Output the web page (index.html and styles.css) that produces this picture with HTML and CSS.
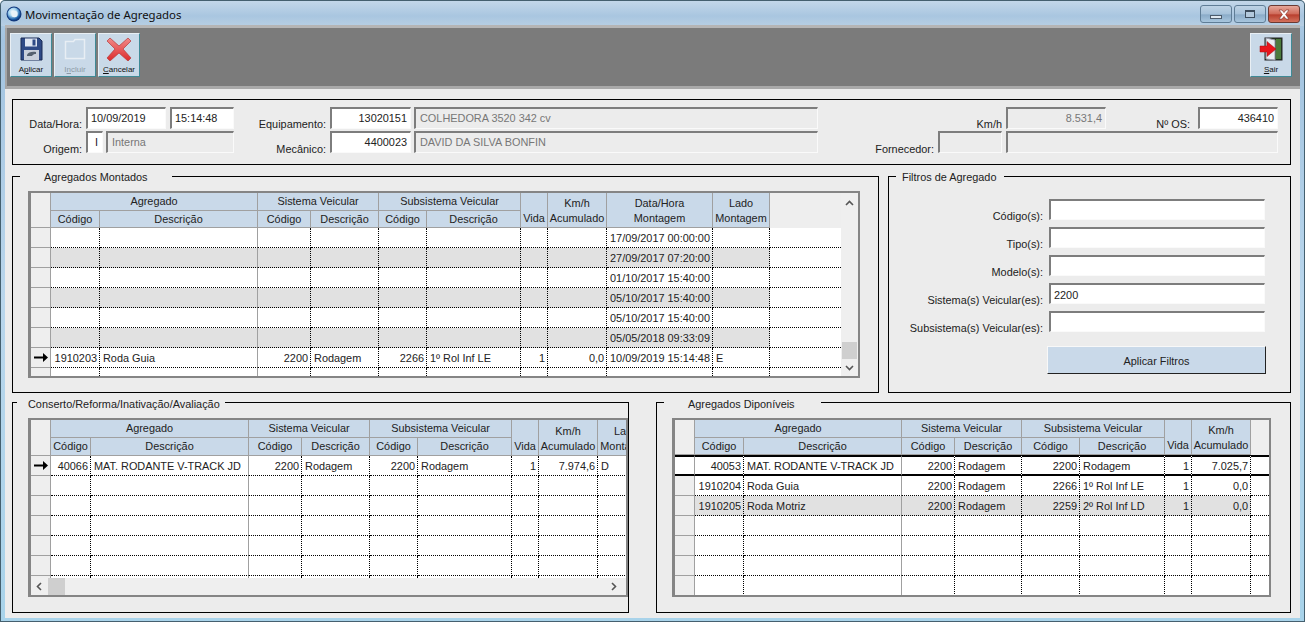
FILE: index.html
```html
<!DOCTYPE html>
<html lang="pt-BR">
<head>
<meta charset="utf-8">
<title>Movimentação de Agregados</title>
<link rel="stylesheet" href="styles.css">
</head>
<body>
<div class="win">
  <header class="titlebar">
    <svg class="appicon" width="16" height="16" viewBox="0 0 16 16"><defs><radialGradient id="ag" cx="0.4" cy="0.35" r="0.7"><stop offset="0" stop-color="#ffffff"/><stop offset="0.45" stop-color="#9fd0ee"/><stop offset="0.8" stop-color="#1c5fa8"/><stop offset="1" stop-color="#0c2f6c"/></radialGradient></defs><circle cx="8" cy="8" r="7.5" fill="#12397e"/><circle cx="8" cy="8" r="6.5" fill="url(#ag)"/><circle cx="8.500" cy="8" r="3.200" fill="#e8f2f8"/></svg>
    <span class="wintitle">Movimentação de Agregados</span>
    <div class="capbtns">
      <div class="capbtn"><span class="g-min"></span></div>
      <div class="capbtn"><span class="g-max"></span></div>
      <div class="capbtn close"><svg width="14" height="11" viewBox="0 0 14 11"><path d="M2 1h3l2 2.600L9 1h3L8.600 5.500 12 10H9L7 7.400 5 10H2l3.400-4.500z" fill="#fff" stroke="#7a2a20" stroke-width=".6"/></svg></div>
    </div>
  </header>
  <div class="client">
    <nav class="toolbar">
      <div class="tgroup">
        <button class="tbtn">
          <svg width="24" height="24" viewBox="0 0 24 24"><path d="M2 1h18l3 3v19H2z" fill="#2f4a86" stroke="#1a2a55"/><rect x="6" y="1.500" width="12" height="8" fill="#dfe6f2"/><rect x="13.500" y="2.500" width="3" height="6" fill="#2f4a86"/><rect x="5" y="13" width="15" height="10" fill="#c9cfdb"/><path d="M8 18c1-3 5-3.500 9-3v2c-2 0-3 .5-4 2H8z" fill="#55606f"/></svg>
          <span class="tlabel">A<u>p</u>licar</span>
        </button>
        <button class="tbtn off">
          <svg width="24" height="24" viewBox="0 0 24 24"><path d="M2.500 4.500h8l1.500-2h9.500v19h-19z" fill="none" stroke="#e8eef4" stroke-width="1.500"/></svg>
          <span class="tlabel">I<u>n</u>cluir</span>
        </button>
        <button class="tbtn">
          <svg width="26" height="24" viewBox="0 0 26 24"><defs><linearGradient id="xg" x1="0" y1="0" x2="0" y2="1"><stop offset="0" stop-color="#f28a8a"/><stop offset="1" stop-color="#dc2a2a"/></linearGradient></defs><path d="M4 1l9 8 9-8 3 3-8 8 8 9-3 3-9-8-9 8-3-3 8-9-8-8z" fill="url(#xg)" stroke="#b53a3a" stroke-width=".7"/></svg>
          <span class="tlabel"><u>C</u>ancelar</span>
        </button>
      </div>
      <button class="tbtn">
        <svg width="24" height="24" viewBox="0 0 24 24"><rect x="6" y="1" width="17" height="22" fill="#24401f" stroke="#222"/><path d="M17 2h5v20h-5z" fill="#4c7a3c"/><path d="M7 1l9 2v20l-9-1z" fill="#e9edf2" stroke="#99a"/><path d="M1 9h7V4.500l9 7.500-9 7.500V15H1z" fill="#e8141c" stroke="#a01010" stroke-width=".5"/></svg>
        <span class="tlabel"><u>S</u>air</span>
      </button>
    </nav>

    <section class="panel">
      <div class="frow">
        <span class="lbl w70">Data/Hora:</span>
        <div class="field w80">10/09/2019</div>
        <div class="field w64 ml4">15:14:48</div>
        <span class="lbl w96">Equipamento:</span>
        <div class="field w81 right">13020151</div>
        <div class="field ro w404 ml3">COLHEDORA 3520 342 cv</div>
        <span class="lbl w188">Km/h</span>
        <div class="field ro w100 right">8.531,4</div>
        <span class="lbl w92 os">Nº OS:</span>
        <div class="field w80 right">436410</div>
      </div>
      <div class="frow">
        <span class="lbl w70">Origem:</span>
        <div class="field w17 ctr">I</div>
        <div class="field ro w128 ml3">Interna</div>
        <span class="lbl w96">Mecânico:</span>
        <div class="field w81 right">4400023</div>
        <div class="field ro w404 ml3">DAVID DA SILVA BONFIN</div>
        <span class="lbl w120">Fornecedor:</span>
        <div class="field ro w64"></div>
        <div class="field ro w272 ml4"></div>
      </div>
    </section>

    <div class="row-mid">
      <fieldset class="gb">
        <legend class="lg lg-mont">Agregados Montados</legend>
        <div class="gb-body">
          <div class="frame with-v t1frame">
            <div class="view">
              <table class="grid">
                <colgroup><col class="c20"><col class="c49"><col class="c158"><col class="c53"><col class="c68"><col class="c48"><col class="c94"><col class="c27"><col class="c59"><col class="c106"><col class="c57"><col class="c71"></colgroup>
                <thead>
                  <tr class="h1"><th class="rh" rowspan="2"></th><th colspan="2">Agregado</th><th colspan="2">Sistema Veicular</th><th colspan="2">Subsistema Veicular</th><th rowspan="2" class="bot">Vida</th><th rowspan="2" class="bot">Km/h<br>Acumulado</th><th rowspan="2" class="bot">Data/Hora<br>Montagem</th><th rowspan="2" class="bot">Lado<br>Montagem</th><th class="rest" rowspan="2"></th></tr>
                  <tr class="h2 short"><th>Código</th><th>Descrição</th><th>Código</th><th>Descrição</th><th>Código</th><th>Descrição</th></tr>
                </thead>
                <tbody>
                  <tr><td class="rh"></td><td></td><td class="solid"></td><td></td><td></td><td></td><td></td><td></td><td></td><td>17/09/2017 00:00:00</td><td></td><td class="rest"></td></tr>
                  <tr class="alt"><td class="rh"></td><td></td><td class="solid"></td><td></td><td></td><td></td><td></td><td></td><td></td><td>27/09/2017 07:20:00</td><td></td><td class="rest"></td></tr>
                  <tr><td class="rh"></td><td></td><td class="solid"></td><td></td><td></td><td></td><td></td><td></td><td></td><td>01/10/2017 15:40:00</td><td></td><td class="rest"></td></tr>
                  <tr class="alt"><td class="rh"></td><td></td><td class="solid"></td><td></td><td></td><td></td><td></td><td></td><td></td><td>05/10/2017 15:40:00</td><td></td><td class="rest"></td></tr>
                  <tr><td class="rh"></td><td></td><td class="solid"></td><td></td><td></td><td></td><td></td><td></td><td></td><td>05/10/2017 15:40:00</td><td></td><td class="rest"></td></tr>
                  <tr class="alt"><td class="rh"></td><td></td><td class="solid"></td><td></td><td></td><td></td><td></td><td></td><td></td><td>05/05/2018 09:33:09</td><td></td><td class="rest"></td></tr>
                  <tr><td class="rh"><svg class="arrow" width="14" height="9" viewBox="0 0 14 9"><path d="M0 3.500h9V0l5 4.500L9 9V5.500H0z"/></svg></td><td class="n">1910203</td><td class="solid">Roda Guia</td><td class="n">2200</td><td>Rodagem</td><td class="n">2266</td><td>1º Rol Inf LE</td><td class="n">1</td><td class="n">0,0</td><td>10/09/2019 15:14:48</td><td>E</td><td class="rest"></td></tr>
                  <tr><td class="rh"></td><td></td><td class="solid"></td><td></td><td></td><td></td><td></td><td></td><td></td><td></td><td></td><td class="rest"></td></tr>
                </tbody>
              </table>
            </div>
            <div class="vscroll">
              <svg width="9" height="6" viewBox="0 0 9 6"><path d="M1 5l3.500-3.500L8 5" fill="none" stroke="#555" stroke-width="1.600"/></svg>
              <div class="vthumb"></div>
              <svg width="9" height="6" viewBox="0 0 9 6"><path d="M1 1l3.500 3.500L8 1" fill="none" stroke="#555" stroke-width="1.600"/></svg>
            </div>
          </div>
        </div>
      </fieldset>

      <fieldset class="gb">
        <legend class="lg lg-filt">Filtros de Agregado</legend>
        <div class="filters">
          <span class="lbl">Código(s):</span><div class="field"></div>
          <span class="lbl">Tipo(s):</span><div class="field"></div>
          <span class="lbl">Modelo(s):</span><div class="field"></div>
          <span class="lbl">Sistema(s) Veicular(es):</span><div class="field">2200</div>
          <span class="lbl">Subsistema(s) Veicular(es):</span><div class="field"></div>
          <button class="applybtn">Aplicar Filtros</button>
        </div>
      </fieldset>
    </div>

    <div class="row-bot">
      <fieldset class="gb">
        <legend class="lg lg-cons">Conserto/Reforma/Inativação/Avaliação</legend>
        <div class="gb-body">
          <div class="frame with-h">
            <div class="view">
              <table class="grid wide">
                <colgroup><col class="c20"><col class="c40"><col class="c158"><col class="c53"><col class="c68"><col class="c48"><col class="c94"><col class="c27"><col class="c59"><col class="c57"></colgroup>
                <thead>
                  <tr class="h1"><th class="rh" rowspan="2"></th><th colspan="2">Agregado</th><th colspan="2">Sistema Veicular</th><th colspan="2">Subsistema Veicular</th><th rowspan="2" class="bot">Vida</th><th rowspan="2" class="bot">Km/h<br>Acumulado</th><th rowspan="2" class="bot">Lado<br>Montagem</th></tr>
                  <tr class="h2"><th>Código</th><th>Descrição</th><th>Código</th><th>Descrição</th><th>Código</th><th>Descrição</th></tr>
                </thead>
                <tbody>
                  <tr><td class="rh"><svg class="arrow" width="14" height="9" viewBox="0 0 14 9"><path d="M0 3.500h9V0l5 4.500L9 9V5.500H0z"/></svg></td><td class="n">40066</td><td class="solid">MAT. RODANTE V-TRACK JD</td><td class="n">2200</td><td>Rodagem</td><td class="n">2200</td><td>Rodagem</td><td class="n">1</td><td class="n">7.974,6</td><td>D</td></tr>
                  <tr><td class="rh"></td><td></td><td class="solid"></td><td></td><td></td><td></td><td></td><td></td><td></td><td></td></tr>
                  <tr><td class="rh"></td><td></td><td class="solid"></td><td></td><td></td><td></td><td></td><td></td><td></td><td></td></tr>
                  <tr><td class="rh"></td><td></td><td class="solid"></td><td></td><td></td><td></td><td></td><td></td><td></td><td></td></tr>
                  <tr><td class="rh"></td><td></td><td class="solid"></td><td></td><td></td><td></td><td></td><td></td><td></td><td></td></tr>
                  <tr><td class="rh"></td><td></td><td class="solid"></td><td></td><td></td><td></td><td></td><td></td><td></td><td></td></tr>
                  <tr><td class="rh"></td><td></td><td class="solid"></td><td></td><td></td><td></td><td></td><td></td><td></td><td></td></tr>
                </tbody>
              </table>
            </div>
            <div class="hscroll">
              <svg width="6" height="9" viewBox="0 0 6 9"><path d="M5 1L1.500 4.500 5 8" fill="none" stroke="#555" stroke-width="1.600"/></svg>
              <div class="hthumb"></div>
              <svg class="hend" width="6" height="9" viewBox="0 0 6 9"><path d="M1 1l3.500 3.500L1 8" fill="none" stroke="#555" stroke-width="1.600"/></svg>
            </div>
          </div>
        </div>
      </fieldset>

      <fieldset class="gb">
        <legend class="lg lg-disp">Agregados Diponíveis</legend>
        <div class="gb-body">
          <div class="frame">
            <div class="view">
              <table class="grid">
                <colgroup><col class="c20"><col class="c49"><col class="c158"><col class="c53"><col class="c67"><col class="c58"><col class="c85"><col class="c27"><col class="c59"><col class="c18"></colgroup>
                <thead>
                  <tr class="h1"><th class="rh" rowspan="2"></th><th colspan="2">Agregado</th><th colspan="2">Sistema Veicular</th><th colspan="2">Subsistema Veicular</th><th rowspan="2" class="bot">Vida</th><th rowspan="2" class="bot">Km/h<br>Acumulado</th><th class="rest" rowspan="2"></th></tr>
                  <tr class="h2 short"><th>Código</th><th>Descrição</th><th>Código</th><th>Descrição</th><th>Código</th><th>Descrição</th></tr>
                </thead>
                <tbody>
                  <tr class="sel"><td class="rh"></td><td class="n">40053</td><td class="solid">MAT. RODANTE V-TRACK JD</td><td class="n">2200</td><td>Rodagem</td><td class="n">2200</td><td>Rodagem</td><td class="n">1</td><td class="n">7.025,7</td><td class="rest"></td></tr>
                  <tr><td class="rh"></td><td class="n">1910204</td><td class="solid">Roda Guia</td><td class="n">2200</td><td>Rodagem</td><td class="n">2266</td><td>1º Rol Inf LE</td><td class="n">1</td><td class="n">0,0</td><td class="rest"></td></tr>
                  <tr class="alt"><td class="rh"></td><td class="n">1910205</td><td class="solid">Roda Motriz</td><td class="n">2200</td><td>Rodagem</td><td class="n">2259</td><td>2º Rol Inf LD</td><td class="n">1</td><td class="n">0,0</td><td class="rest"></td></tr>
                  <tr><td class="rh"></td><td></td><td class="solid"></td><td></td><td></td><td></td><td></td><td></td><td></td><td class="rest"></td></tr>
                  <tr><td class="rh"></td><td></td><td class="solid"></td><td></td><td></td><td></td><td></td><td></td><td></td><td class="rest"></td></tr>
                  <tr><td class="rh"></td><td></td><td class="solid"></td><td></td><td></td><td></td><td></td><td></td><td></td><td class="rest"></td></tr>
                  <tr><td class="rh"></td><td></td><td class="solid"></td><td></td><td></td><td></td><td></td><td></td><td></td><td class="rest"></td></tr>
                </tbody>
              </table>
            </div>
          </div>
        </div>
      </fieldset>
    </div>
  </div>
</div>
</body>
</html>
```
FILE: styles.css
```css
* { box-sizing: border-box; }
html, body { margin: 0; padding: 0; height: 100%; overflow: hidden; }
body { font-family: "Liberation Sans", Arial, sans-serif; font-size: 10.9px; color: #1c1c1c; }

.win {
  width: 1305px; height: 622px; display: flex; flex-direction: column;
  padding: 0 5px 4px 5px;
  background: linear-gradient(180deg, #b4cfe6 0, #a3c4e0 40px, #b9d6ec 300px, #a8d3ea 100%);
  border-radius: 5px 5px 0 0;
  box-shadow: inset 0 0 0 1px #45606f;
}
.titlebar { height: 25px; flex: none; display: flex; align-items: center; margin-left: -4px; margin-right: -4px; margin-top: 1px; padding: 1px 4px 0 2px; background: linear-gradient(180deg, #c3d7e9 0, #a9c6e0 60%, #b7cfe4 100%); border-radius: 5px 5px 0 0; margin-bottom: -1px; }
.appicon { flex: none; margin-left: 3px; }
.wintitle { margin-left: 3px; font-family: "Noto Sans", sans-serif; font-size: 11.4px; color: #101010; }
.capbtns { margin-left: auto; display: flex; gap: 2px; align-self: flex-start; margin-top: 3px; }
.capbtn { width: 32px; height: 18px; display: flex; align-items: center; justify-content: center; border: 1px solid #5f7d96; border-radius: 3px; background: linear-gradient(180deg, #bed3e5 0, #a6c2da 50%, #8aabc8 55%, #a8c6de 100%); }
.capbtn.close { background: linear-gradient(180deg, #e6a79a 0, #cf6a59 50%, #b83f2e 55%, #d3715c 100%); border-color: #6b3a33; }
.g-min { display: block; width: 12px; height: 4px; margin-top: 5px; background: #dfe8f0; border: 1px solid #4c5c6c; }
.g-max { display: block; width: 10px; height: 8px; border: 1px solid #3c4c5c; border-top-width: 2px; background: #b3c9dc; }

.client { flex: 1; min-height: 0; background: #ececec; border-top: 3px solid #b5b5b5; display: flex; flex-direction: column; padding: 0 9px 0 7px; }
.toolbar { flex: none; height: 61px; margin: 0 -9px 0 -7px; padding: 5px 8px 0 3px; background: #7b7b7b; border-bottom: 3px solid #a9a9a9; border-left: 2px solid #a5a5a5; display: flex; justify-content: space-between; align-items: flex-start; }
.tgroup { display: flex; gap: 2px; }
.tbtn { width: 42px; height: 44px; padding: 3px 0 0; margin: 0; font: inherit; background: #c9d9e8; border: 1px solid; border-color: #e9eff4 #3f8a96 #3f8a96 #e9eff4; display: flex; flex-direction: column; align-items: center; }
.tlabel { font-size: 8px; margin-top: 4px; color: #111; line-height: 9px; }
.tbtn.off .tlabel { color: #8c99a5; }

.panel { flex: none; height: 66px; margin-top: 10px; border: 1px solid #000; padding: 7px 0 0 0; display: flex; flex-direction: column; gap: 2px; }
.frow { display: flex; align-items: flex-end; height: 22px; }
.frow .lbl { margin-bottom: -2px; }
.frow + .frow .lbl { margin-bottom: -3px; }
.lbl { padding-right: 4px; text-align: right; white-space: nowrap; line-height: 13px; color: #222; flex: none; }
.lbl.os { padding-right: 8px; }
.field { height: 22px; flex: none; background: #fff; border: 1px solid #fafafa; border-top: 2px solid #7d7d7d; border-left: 2px solid #7d7d7d; padding: 2px 3px 0; line-height: 14px; white-space: nowrap; overflow: hidden; color: #222; }
.field.ro { background: #ececec; color: #777; padding-left: 4px; }
.right { text-align: right; }
.ctr { text-align: right; padding-right: 4px; }
.ml3 { margin-left: 3px; }
.ml4 { margin-left: 4px; }
.w17 { width: 17px; } .w64 { width: 64px; } .w70 { width: 73px; } .w80 { width: 80px; } .w81 { width: 81px; }
.w92 { width: 92px; } .w96 { width: 96px; } .w100 { width: 100px; } .w120 { width: 120px; } .w128 { width: 128px; }
.w188 { width: 188px; } .w272 { width: 272px; } .w404 { width: 404px; }

.row-mid { flex: none; display: grid; grid-template-columns: 867px 403px; column-gap: 9px; height: 224px; margin-top: 4px; }
.row-bot { flex: none; display: grid; grid-template-columns: 617px 635px; column-gap: 27px; height: 218px; margin-top: 2px; }
.gb { margin: 0; padding: 0; border: 1px solid #000; min-width: 0; min-inline-size: 0; }
.lg { font-size: 10.9px; line-height: 14px; color: #222; padding: 0; position: relative; top: 1px; }
.row-bot .lg { top: 2px; }
.lg-mont { margin-left: 7px; padding: 0 24px; }
.lg-filt { margin-left: 7px; padding: 0 8px 0 6px; }
.lg-cons { margin-left: 4px; padding: 0 5px 0 11px; }
.lg-disp { margin-left: 7px; padding: 0 26px 0 24px; }
.gb-body { padding: 8px 0 0 15px; }
.row-bot .gb-body { padding-top: 9px; }

.frame { border: 2px solid #858585; border-left-width: 3px; background: #efefef; display: flex; width: 600px; height: 179px; flex-direction: column; }
.t1frame { width: 832px; height: 187px; flex-direction: row; }
.gb:nth-child(2) .frame { width: 599px; }
.view { flex: 1; min-width: 0; min-height: 0; overflow: hidden; background: #fff; }
.with-v .view { flex: none; width: 810px; }
.grid { border-collapse: separate; border-spacing: 0; table-layout: fixed; width: 100%; }
.t1frame .grid { width: 810px; }
.grid.wide { width: 624px; }
.c18 { width: 18px; } .c20 { width: 20px; } .c27 { width: 27px; } .c40 { width: 40px; } .c48 { width: 48px; } .c49 { width: 49px; } .c53 { width: 53px; }
.c57 { width: 57px; } .c58 { width: 58px; } .c59 { width: 59px; } .c67 { width: 67px; } .c68 { width: 68px; } .c71 { width: 71px; } .c85 { width: 85px; } .c94 { width: 94px; }
.c106 { width: 106px; } .c158 { width: 158px; }

.grid th { font-weight: 400; background: #c9d9e9; border-right: 1px solid #a0a0a0; border-bottom: 1px solid #a0a0a0; padding: 0; overflow: hidden; white-space: nowrap; text-align: center; line-height: 15px; color: #222; }
.grid th.rh { background: #eeeeee; border-right: 1px solid #a0a0a0; border-bottom: 1px solid #a0a0a0; }
.grid th.rest { background: #eeeeee; border-right: 0; border-bottom: 0; }
.grid th.bot { vertical-align: bottom; padding-bottom: 1px; }
.h1 th { height: 18px; }
.h1 th[colspan] { padding-bottom: 1px; }
.h2 th { height: 18px; }
.h2.short th { height: 17px; }

.grid td { height: 20px; padding: 0 2px 0 3px; border-right: 1px dotted #000; border-bottom: 1px dotted #000; white-space: nowrap; overflow: hidden; line-height: 14px; color: #222; background: #fff; }
.grid td.rest { border-right: 0; }
.grid td.n { text-align: right; }
.grid td.solid { border-right: 1px solid #a0a0a0; }
.grid td.rh { background: #eeeeee; border-right: 1px solid #a0a0a0; border-bottom: 1px solid #a0a0a0; padding: 0; text-align: center; }
.grid .alt td { background: #e1e1e1; }
.grid .alt td.rest { background: #fff; }
.grid .alt td.rh { background: #eeeeee; }
.grid .sel td { border-top: 2px solid #000; border-bottom: 2px solid #000; height: 21px; background: #fff; }
.grid .sel td.rh { border-top: 2px solid #000; border-bottom: 2px solid #000; }
.arrow { display: block; margin: 0 auto; fill: #000; }

.vscroll { flex: none; width: 17px; background: #efefef; display: flex; flex-direction: column; align-items: center; padding: 7px 0 5px; }
.vthumb { width: 15px; height: 17px; margin-top: auto; margin-bottom: 6px; background: #cfcfcf; }
.hscroll { flex: none; height: 17px; background: #efefef; display: flex; align-items: center; padding: 0 9px 0 5px; }
.hthumb { width: 17px; height: 17px; margin-left: 6px; background: #cfcfcf; }
.hend { margin-left: auto; }

.filters { display: grid; grid-template-columns: 154px 216px; grid-auto-rows: 21px; row-gap: 7px; padding: 16px 0 0 6px; }
.filters .field { height: 21px; padding-top: 3px; }
.filters .lbl { align-self: end; padding-right: 6px; margin-bottom: -3px; }
.applybtn { grid-column: 2; width: 219px; height: 28px; margin: 7px 0 0 -2px; padding-top: 2px; font: inherit; color: #222; background: #c9d9e9; border: 1px solid; border-color: #f8f8f8 #222 #222 #f8f8f8; }
```
